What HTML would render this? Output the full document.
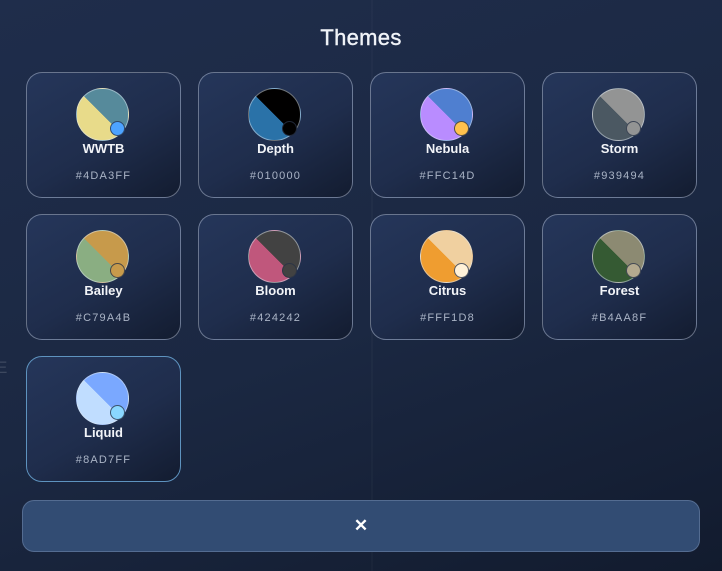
<!DOCTYPE html>
<html><head><style>
*{margin:0;padding:0;box-sizing:border-box}
body{width:722px;height:571px;overflow:hidden;font-family:"Liberation Sans",sans-serif;background:linear-gradient(160deg,#1f2d4b 0%,#1b2842 55%,#121b2e 100%);position:relative}
.vl{position:absolute;left:371px;top:0;width:2px;height:571px;background:rgba(255,255,255,0.025)}
h1{position:absolute;top:25px;left:0;width:722px;text-align:center;color:#f0f3f8;font-size:22px;font-weight:normal;letter-spacing:0.3px;-webkit-text-stroke:0.4px #f0f3f8}
.e{position:absolute;left:-4px;top:358px;color:rgba(255,255,255,0.15);font-size:17px}
.card{position:absolute;width:155px;height:126px;border:1px solid rgba(200,210,230,0.45);border-radius:16px;background:linear-gradient(150deg,#25365a 0%,#1f2d4c 55%,#131c30 100%)}
.card.sel{border-color:#5e93bf}
.c{position:absolute;left:49px;top:15px;width:53px;height:53px;border-radius:50%;border:1px solid rgba(220,230,240,0.5)}
.d{position:absolute;left:83px;top:48px;width:15px;height:15px;border-radius:50%;border:1px solid rgba(40,50,70,0.8)}
.n{position:absolute;top:68px;width:100%;text-align:center;color:#f2f4f8;font-size:13px;font-weight:bold}
.h{position:absolute;top:97px;width:100%;text-align:center;color:#aab4c6;font-size:11px;letter-spacing:1.2px}
.btn{position:absolute;left:22px;top:500px;width:678px;height:52px;border-radius:12px;background:#324c73;border:1px solid rgba(150,170,200,0.35);color:#fff;text-align:center;line-height:50px;font-size:17px;font-weight:bold}
</style></head><body>
<div class="vl"></div>
<h1>Themes</h1>
<div class="e">E</div>

<div class="card" style="left:26px;top:72px"><div class="c" style="background:linear-gradient(45deg,#e8db8a 50%,#568a9b 50%)"></div><div class="d" style="background:#4da3ff"></div><div class="n">WWTB</div><div class="h">#4DA3FF</div></div>
<div class="card" style="left:198px;top:72px"><div class="c" style="background:linear-gradient(45deg,#2a72a8 50%,#010000 50%)"></div><div class="d" style="background:#010000"></div><div class="n">Depth</div><div class="h">#010000</div></div>
<div class="card" style="left:370px;top:72px"><div class="c" style="background:linear-gradient(45deg,#b98cff 50%,#4f7fd0 50%)"></div><div class="d" style="background:#ffc14d"></div><div class="n">Nebula</div><div class="h">#FFC14D</div></div>
<div class="card" style="left:542px;top:72px"><div class="c" style="background:linear-gradient(45deg,#4b5862 50%,#939494 50%)"></div><div class="d" style="background:#939494"></div><div class="n">Storm</div><div class="h">#939494</div></div>

<div class="card" style="left:26px;top:214px"><div class="c" style="background:linear-gradient(45deg,#8aae82 50%,#c79a4b 50%)"></div><div class="d" style="background:#c79a4b"></div><div class="n">Bailey</div><div class="h">#C79A4B</div></div>
<div class="card" style="left:198px;top:214px"><div class="c" style="background:linear-gradient(45deg,#c0577c 50%,#424242 50%)"></div><div class="d" style="background:#424242"></div><div class="n">Bloom</div><div class="h">#424242</div></div>
<div class="card" style="left:370px;top:214px"><div class="c" style="background:linear-gradient(45deg,#ef9d30 50%,#f0d0a0 50%)"></div><div class="d" style="background:#fff1d8"></div><div class="n">Citrus</div><div class="h">#FFF1D8</div></div>
<div class="card" style="left:542px;top:214px"><div class="c" style="background:linear-gradient(45deg,#355a33 50%,#8c8a72 50%)"></div><div class="d" style="background:#b4aa8f"></div><div class="n">Forest</div><div class="h">#B4AA8F</div></div>

<div class="card sel" style="left:26px;top:356px"><div class="c" style="background:linear-gradient(45deg,#c0ddff 50%,#7aa8ff 50%)"></div><div class="d" style="background:#8ad7ff"></div><div class="n">Liquid</div><div class="h">#8AD7FF</div></div>

<div class="btn">✕</div>
</body></html>
